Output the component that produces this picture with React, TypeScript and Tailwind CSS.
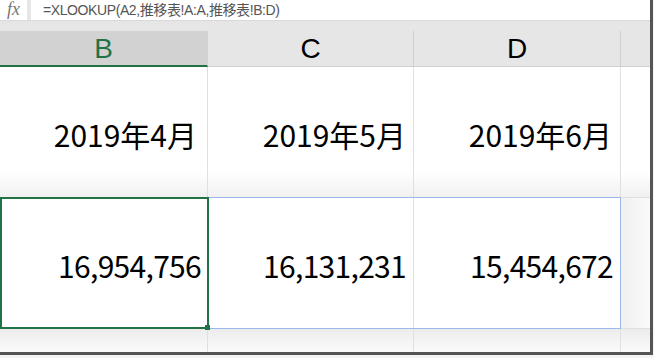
import React from "react";

const cellFont = { fontFamily: '"Noto Sans CJK JP", "Noto Sans", sans-serif' };

export default function App() {
  return (
    <div className="w-[654px] h-[358px] bg-[#f4f4f4] overflow-hidden">
      <div className="w-[653px] h-[355px] border-r-[3px] border-b-[3px] border-[#555555] bg-white flex flex-col relative">
        {/* formula bar */}
        <div className="h-[21px] flex border-b border-[#d9d9d9] shrink-0">
          <div className="w-[27px] flex items-center justify-center text-[#777] italic text-[18px] pb-[2px]" style={{ fontFamily: '"Liberation Serif", serif' }}>
            fx
          </div>
          <div className="w-[4px] bg-[#e6e6e6]" />
          <div className="flex-1 flex items-center pl-[12px] text-[14px] text-[#555] tracking-[-0.4px]" style={{ fontFamily: '"Liberation Sans", "Noto Sans CJK JP", sans-serif' }}>
            =XLOOKUP(A2,推移表!A:A,推移表!B:D)
          </div>
        </div>
        {/* header strip */}
        <div className="h-[10px] bg-[#e6e6e6] shrink-0" />
        {/* column headers */}
        <div className="h-[36px] flex bg-[#e6e6e6] shrink-0 text-[28px]" style={{ fontFamily: '"Liberation Sans", sans-serif' }}>
          <div className="w-[208px] bg-[#d2d2d2] border-r border-[#d2d2d2] border-b-2 border-b-[#217346] flex items-center justify-center text-[#217346] pt-[2px]">B</div>
          <div className="w-[206px] border-r border-[#cfcfcf] border-b border-b-[#cfcfcf] flex items-center justify-center text-black">C</div>
          <div className="w-[207px] border-r border-[#cfcfcf] border-b border-b-[#cfcfcf] flex items-center justify-center text-black">D</div>
          <div className="flex-1 border-b border-[#cfcfcf]" />
        </div>
        {/* row 1 */}
        <div className="h-[131px] flex shrink-0 text-[30px] text-black bg-[linear-gradient(to_bottom,#ffffff_80%,#f0f0f0)]" style={cellFont}>
          <div className="w-[208px] border-r border-b border-[#e0e0e0] flex items-center justify-end pr-[10px] pt-[4px]">2019年4月</div>
          <div className="w-[206px] border-r border-b border-[#e0e0e0] flex items-center justify-end pr-[7px] pt-[4px]">2019年5月</div>
          <div className="w-[207px] border-r border-b border-[#e0e0e0] flex items-center justify-end pr-[8px] pt-[4px]">2019年6月</div>
          <div className="flex-1 border-b border-[#e0e0e0]" />
        </div>
        {/* row 2 */}
        <div className="h-[131px] flex shrink-0 text-[30px] text-black relative tracking-[-0.7px]" style={cellFont}>
          <div className="w-[208px] border-r border-b border-[#e0e0e0] flex items-center justify-end pr-[6px] pt-[4px]">16,954,756</div>
          <div className="w-[206px] border-r border-b border-[#e0e0e0] flex items-center justify-end pr-[7px] pt-[4px]">16,131,231</div>
          <div className="w-[207px] border-r border-b border-[#e0e0e0] flex items-center justify-end pr-[7px] pt-[4px]">15,454,672</div>
          <div className="flex-1 border-b border-[#e0e0e0] bg-[linear-gradient(to_right,#f0f0f0,#fafafa)]" />
          {/* range border */}
          <div className="absolute left-[207px] top-[-1px] w-[414px] h-[132px] border border-[#9ab8ec]" />
          {/* active cell */}
          <div className="absolute left-0 top-[-1px] w-[209px] h-[132px] border-2 border-[#217346]" />
          <div className="absolute left-[205px] top-[127px] w-[5px] h-[5px] bg-[#217346]" />
        </div>
        {/* row 3 */}
        <div className="flex-1 flex bg-[linear-gradient(to_bottom,#ececec,#fbfbfb)]">
          <div className="w-[208px] border-r border-[#e0e0e0]" />
          <div className="w-[206px] border-r border-[#e0e0e0]" />
          <div className="w-[207px] border-r border-[#e0e0e0]" />
          <div className="flex-1" />
        </div>
      </div>
    </div>
  );
}
